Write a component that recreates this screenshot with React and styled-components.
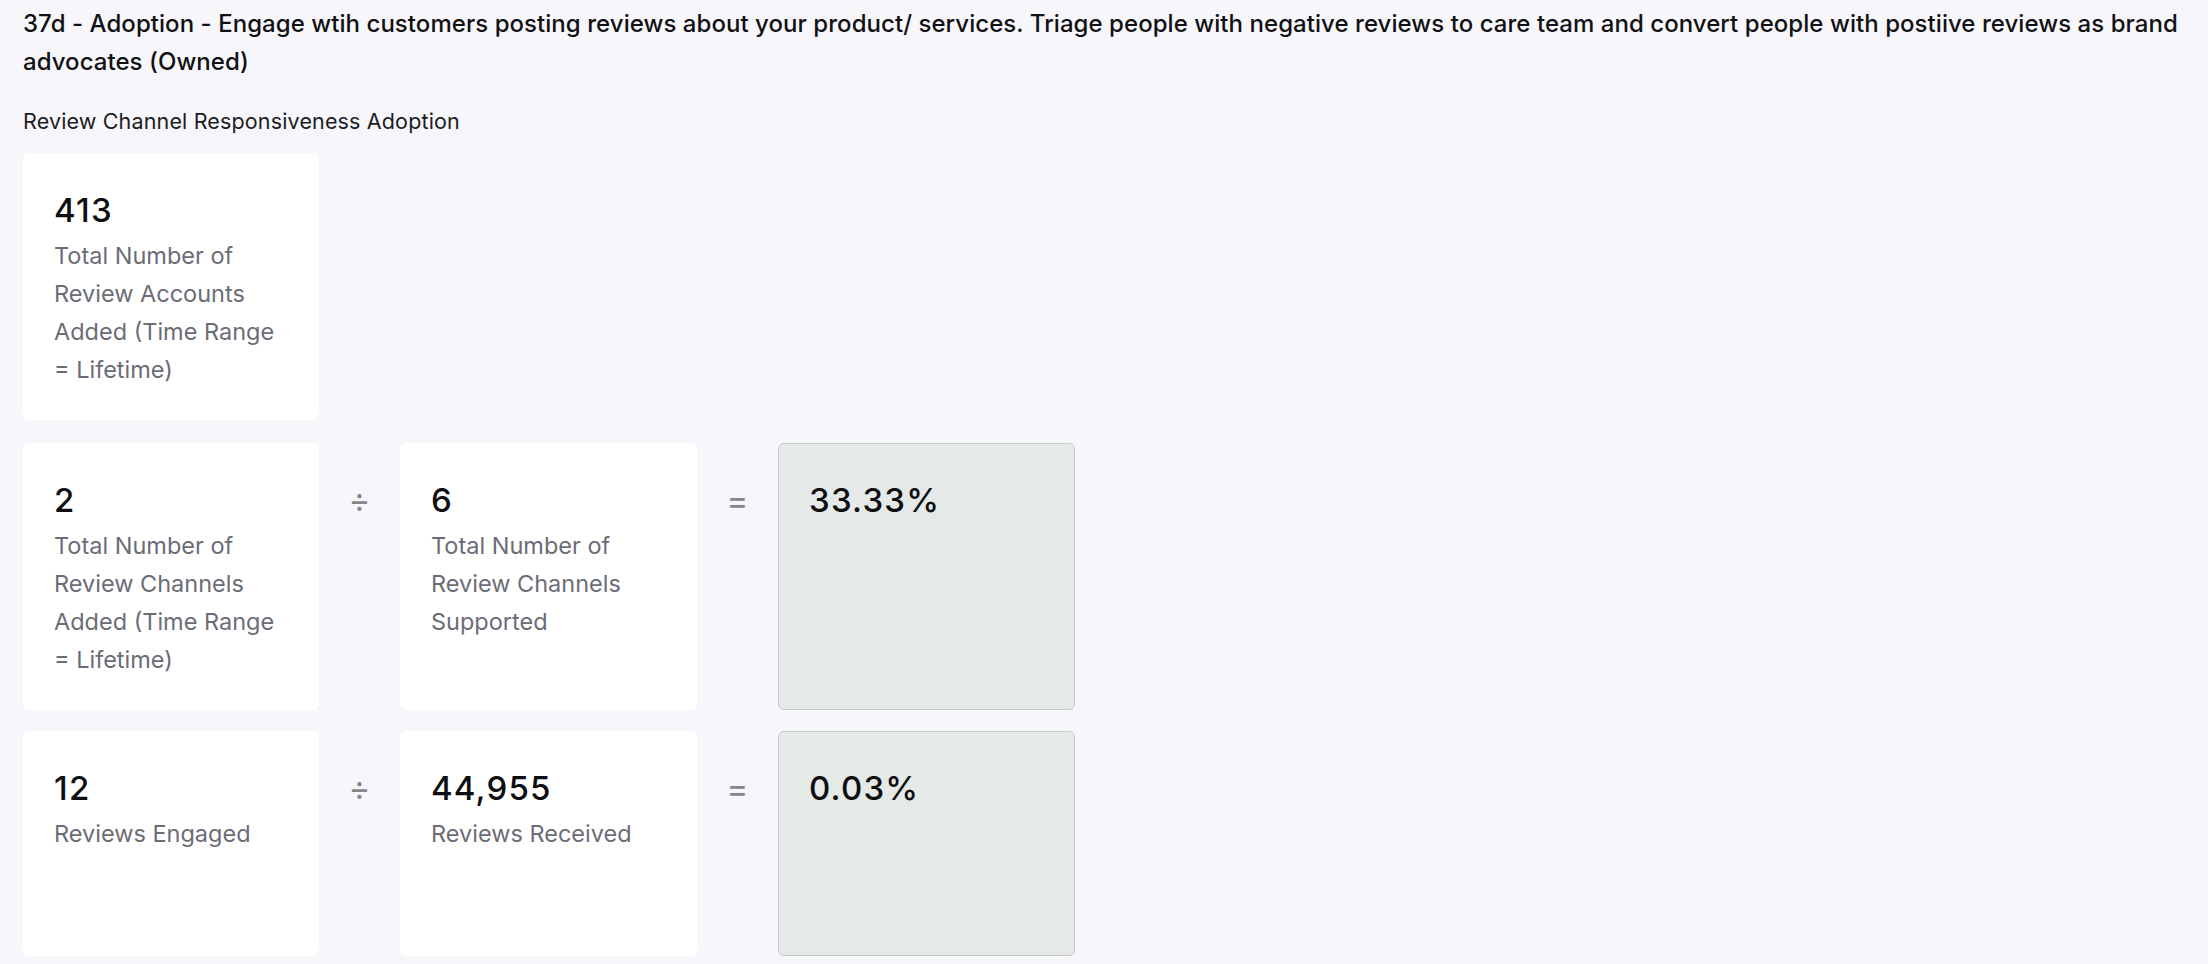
import React from 'react';
import styled, { createGlobalStyle } from 'styled-components';

const GlobalStyle = createGlobalStyle`
  html, body {
    margin: 0;
    padding: 0;
    background: #f7f7fb;
  }
  body {
    font-family: Inter, "Noto Sans", "Liberation Sans", sans-serif;
    -webkit-font-smoothing: antialiased;
  }
`;

const Page = styled.div`
  padding: 5px 24px 8px 23px;
  color: #121214;
`;

const Title = styled.h1`
  margin: 0;
  font-size: 24px;
  line-height: 38px;
  font-weight: 500;
  letter-spacing: 0.05px;
  color: #111113;
`;

const Subtitle = styled.div`
  margin-top: 26px;
  font-size: 21.5px;
  line-height: 28px;
  font-weight: 400;
  letter-spacing: 0.15px;
  color: #1c1c1f;
`;

const Rows = styled.div`
  margin-top: 18px;
  display: flex;
  flex-direction: column;
  gap: 23px;
`;

const Row = styled.div`
  display: grid;
  grid-template-columns: 296px 81px 297px 81px 297px;
  height: ${props => props.height}px;
`;

const Card = styled.div`
  background: ${props => props.result ? '#e5e9e7' : '#ffffff'};
  border: 1px solid ${props => props.result ? '#c3cbc6' : 'transparent'};
  border-radius: 6px;
  padding: 36px 30px 30px;
  box-sizing: border-box;
`;

const Value = styled.div`
  font-size: 33px;
  line-height: 40px;
  font-weight: 500;
  letter-spacing: 1.2px;
  color: #0e0e10;
  margin-bottom: 7px;
`;

const Label = styled.div`
  font-size: 23.5px;
  line-height: 38px;
  color: #6c6c76;
`;

const Operator = styled.div`
  padding-top: 37px;
  line-height: 40px;
  font-size: 33px;
  text-align: center;
  color: #85858e;
`;

const Metric = ({ value, label, result }) => (
  <Card result={result}>
    <Value>{value}</Value>
    {label && <Label>{label}</Label>}
  </Card>
);

const ratios = [
  {
    height: 265,
    a: { value: '2', label: 'Total Number of Review Channels Added (Time Range = Lifetime)' },
    b: { value: '6', label: 'Total Number of Review Channels Supported' },
    result: '33.33%',
  },
  {
    height: 225,
    a: { value: '12', label: 'Reviews Engaged' },
    b: { value: '44,955', label: 'Reviews Received' },
    result: '0.03%',
  },
];

export default function App() {
  return (
    <>
      <GlobalStyle />
      <Page>
        <Title>
          37d - Adoption - Engage wtih customers posting reviews about your product/ services. Triage people with negative reviews to care team and convert people with postiive reviews as brand advocates (Owned)
        </Title>
        <Subtitle>Review Channel Responsiveness Adoption</Subtitle>
        <Rows>
          <Row height={267}>
            <Metric value="413" label="Total Number of Review Accounts Added (Time Range = Lifetime)" />
          </Row>
          {ratios.map((r, i) => (
            <Row key={i} height={r.height}>
              <Metric {...r.a} />
              <Operator>÷</Operator>
              <Metric {...r.b} />
              <Operator>=</Operator>
              <Metric value={r.result} result />
            </Row>
          ))}
        </Rows>
      </Page>
    </>
  );
}
